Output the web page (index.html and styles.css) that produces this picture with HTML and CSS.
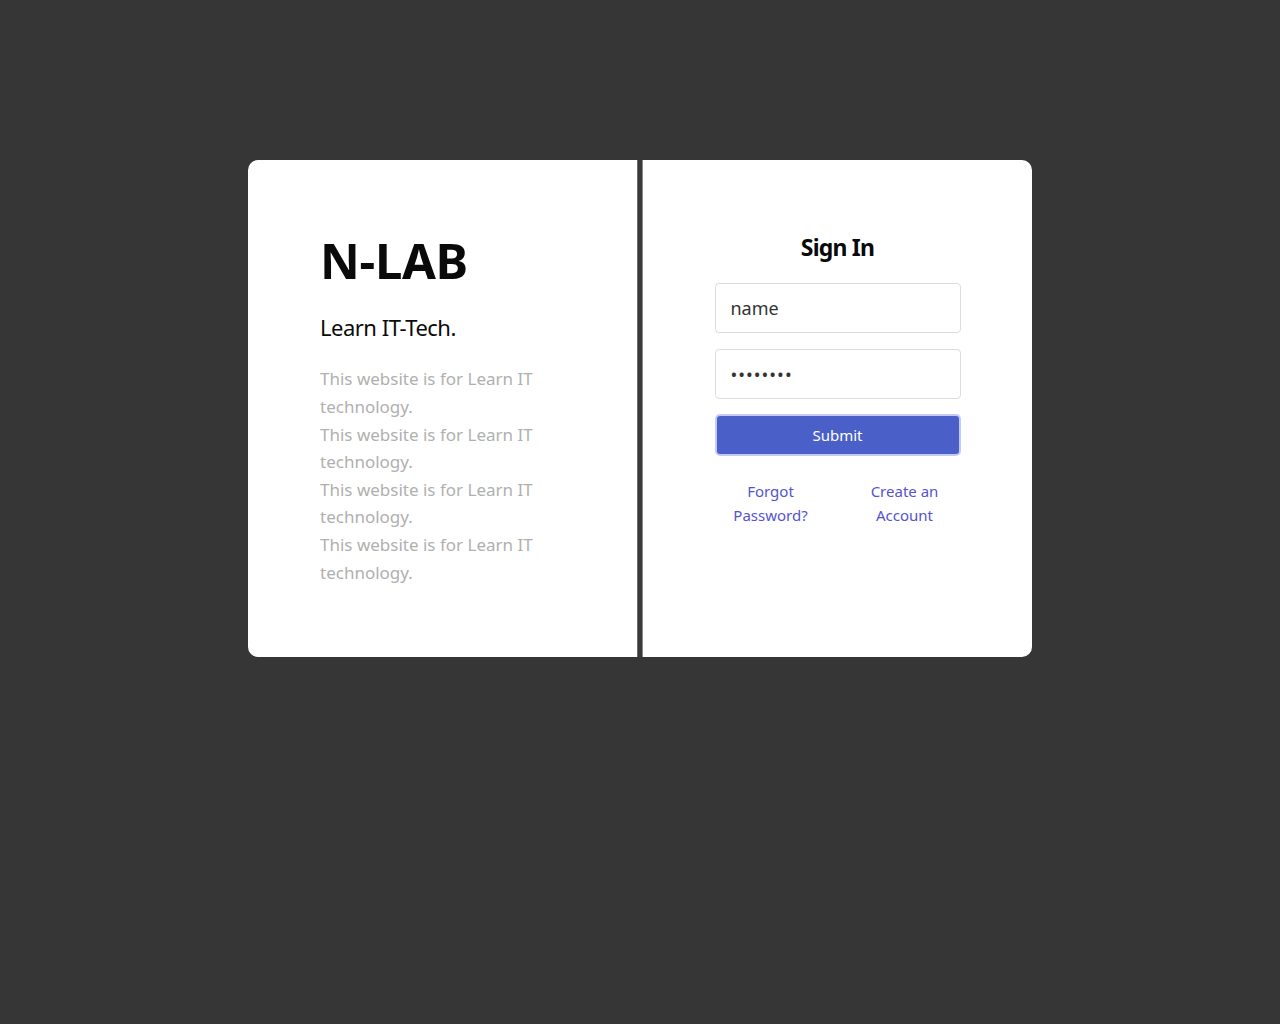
FILE: index.html
```html
<!DOCTYPE html>
<html lang="en">
<head>
<meta charset="utf-8">
<title>N-LAB Sign In</title>
<link rel="stylesheet" href="styles.css">
</head>
<body>
<main class="card">
  <section class="intro">
    <h1 class="brand">N-LAB</h1>
    <h2 class="tagline">Learn IT-Tech.</h2>
    <p class="desc">This website is for Learn IT technology.<br>This website is for Learn IT technology.<br>This website is for Learn IT technology.<br>This website is for Learn IT technology.</p>
  </section>
  <div class="divider"></div>
  <section class="signin">
    <form class="form">
      <h2 class="title">Sign In</h2>
      <input class="field" type="text" value="name">
      <input class="field" type="password" value="password">
      <button class="submit" type="button">Submit</button>
      <div class="links">
        <a class="link" href="#">Forgot Password?</a>
        <a class="link" href="#">Create an Account</a>
      </div>
    </form>
  </section>
</main>
</body>
</html>
```
FILE: styles.css
```css
html, body {
  margin: 0;
  padding: 0;
  background: #363636;
}
body {
  font-family: "Noto Sans", "Open Sans", sans-serif;
  padding-top: 160px;
}
.card {
  width: 784px;
  height: 497px;
  margin: 0 auto;
  background: #fff;
  border-radius: 10px;
  display: grid;
  grid-template-columns: 1fr 6px 1fr;
  overflow: hidden;
}
.intro {
  padding: 71px 40px 0 72px;
}
.brand {
  margin: 0;
  font-size: 49px;
  font-weight: 700;
  color: #0a0a0a;
  line-height: 1.2;
  letter-spacing: -0.3px;
}
.tagline {
  margin: 23px 0 0;
  font-size: 22px;
  font-weight: 400;
  color: #0a0a0a;
  letter-spacing: -0.5px;
  line-height: 1.3;
}
.desc {
  margin: 24px 0 0;
  font-size: 17px;
  line-height: 27.6px;
  color: #b0b0b0;
  width: 225px;
}
.divider {
  background: #3a3a3a;
  border-left: 1px solid #6a6a6a;
  border-right: 1px solid #8a8a8a;
}
.signin {
  display: flex;
  justify-content: center;
}
.form {
  width: 246px;
  display: flex;
  flex-direction: column;
  padding-top: 71px;
}
.title {
  margin: 0 0 20px;
  text-align: center;
  font-size: 23px;
  font-weight: 700;
  color: #0a0a0a;
  letter-spacing: -0.8px;
  line-height: 1.4;
}
.field {
  box-sizing: border-box;
  height: 50px;
  border: 1px solid #dcdcdc;
  border-radius: 4px;
  padding: 0 15px;
  font-family: inherit;
  font-size: 18px;
  color: #333;
  margin-bottom: 16px;
  outline: none;
}
.field[type="password"] {
  letter-spacing: 1px;
}
.submit {
  height: 42px;
  border: 2px solid #c4cbf2;
  border-radius: 5px;
  background: #4a5fc8;
  color: #fff;
  font-family: inherit;
  font-size: 15px;
  margin-top: -1px;
}
.links {
  display: flex;
  justify-content: space-between;
  padding: 0 14px;
  margin-top: 23px;
}
.link {
  width: 84px;
  text-align: center;
  font-size: 15px;
  line-height: 24px;
  color: #5454d0;
  text-decoration: none;
}
```
